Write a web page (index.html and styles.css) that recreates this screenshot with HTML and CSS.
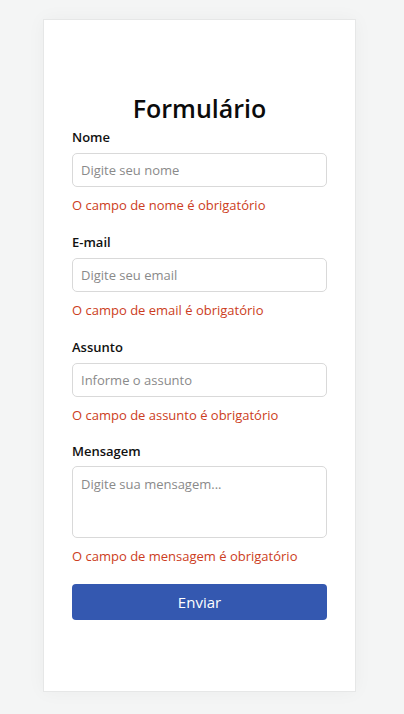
FILE: index.html
```html
<!DOCTYPE html>
<html lang="pt-BR">
<head>
<meta charset="utf-8">
<title>Formulário</title>
<link rel="stylesheet" href="styles.css">
</head>
<body>
<main class="card">
  <h1 class="title">Formulário</h1>
  <form class="form">
    <div class="field">
      <label class="label">Nome</label>
      <input class="input" type="text" placeholder="Digite seu nome">
      <p class="error">O campo de nome é obrigatório</p>
    </div>
    <div class="field">
      <label class="label">E-mail</label>
      <input class="input" type="text" placeholder="Digite seu email">
      <p class="error">O campo de email é obrigatório</p>
    </div>
    <div class="field">
      <label class="label">Assunto</label>
      <input class="input" type="text" placeholder="Informe o assunto">
      <p class="error">O campo de assunto é obrigatório</p>
    </div>
    <div class="field field-last">
      <label class="label label-tight">Mensagem</label>
      <textarea class="input textarea" placeholder="Digite sua mensagem..."></textarea>
      <p class="error">O campo de mensagem é obrigatório</p>
    </div>
    <button class="button" type="button">Enviar</button>
  </form>
</main>
</body>
</html>
```
FILE: styles.css
```css
* { box-sizing: border-box; }
html, body { margin: 0; padding: 0; }
body {
  background: #f4f5f5;
  font-family: "Open Sans", "Noto Sans", sans-serif;
  padding: 19px 0 0 43px;
  height: 714px;
}
.card {
  width: 313px;
  height: 673px;
  background: #ffffff;
  border: 1px solid #e6e7e7;
  box-shadow: 0 0 18px rgba(0, 0, 0, 0.04);
  padding: 73px 28px 0 28px;
}
.title {
  margin: 0;
  font-size: 25px;
  line-height: 30px;
  font-weight: 600;
  text-align: center;
  color: #0b0b0b;
}
.form {
  margin-top: 4px;
  display: flex;
  flex-direction: column;
}
.field {
  display: flex;
  flex-direction: column;
  margin-bottom: 17px;
}
.field-last { margin-bottom: 18px; }
.label {
  font-size: 13px;
  line-height: 20px;
  font-weight: 600;
  color: #111;
  margin-bottom: 6px;
}
.label-tight { margin-top: -1px; margin-bottom: 5px; }
.input {
  width: 255px;
  height: 34px;
  border: 1px solid #d9d9d9;
  border-radius: 5px;
  padding: 0 8px;
  font-family: inherit;
  font-size: 13px;
  color: #333;
  background: #fff;
  outline: none;
}
.input::placeholder { color: #8a8a8a; }
.textarea {
  height: 72px;
  padding: 7px 8px;
  resize: none;
  line-height: 20px;
}
.error {
  margin: 8px 0 0 0;
  font-size: 13px;
  line-height: 20px;
  color: #cc3d22;
}
.button {
  width: 255px;
  height: 36px;
  border: none;
  border-radius: 4px;
  background: #3458b0;
  color: #fff;
  font-family: inherit;
  font-size: 15px;
  font-weight: 500;
}
```
